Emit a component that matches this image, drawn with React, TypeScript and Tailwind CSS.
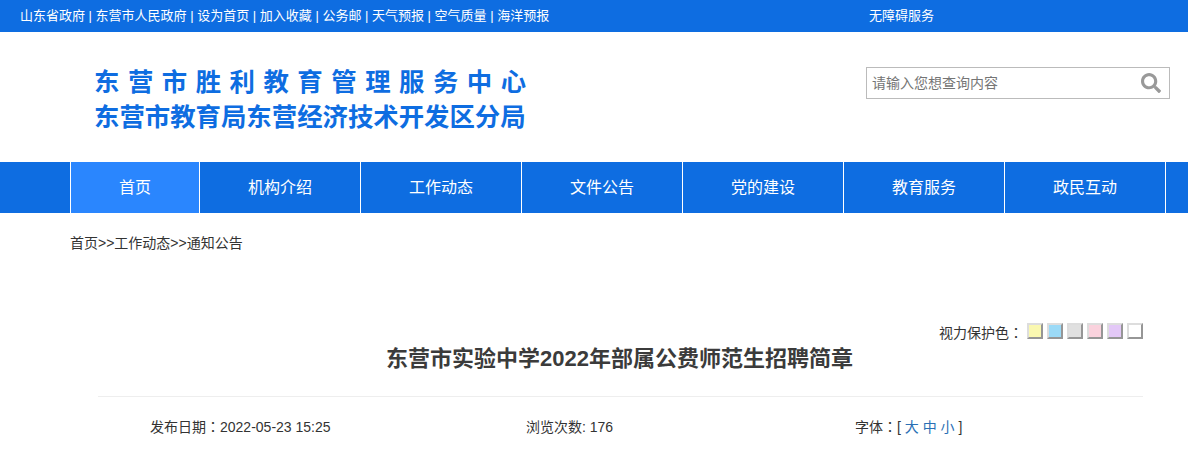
import { FaSearch } from "react-icons/fa";

const topLinks = ["山东省政府", "东营市人民政府", "设为首页", "加入收藏", "公务邮", "天气预报", "空气质量", "海洋预报"];

const navItems = ["机构介绍", "工作动态", "文件公告", "党的建设", "教育服务", "政民互动"];

const swatches = ["bg-[#faf8b0]", "bg-[#9bdaf7]", "bg-[#e0e0e0]", "bg-[#fad2dd]", "bg-[#e3c8f7]", "bg-white"];

// the full-width colon sits centred in the reference, as in the TC font
function Colon() {
  return <span className="font-['Noto_Sans_CJK_TC',sans-serif]">：</span>;
}

export default function App() {
  return (
    <div className="w-[1188px] h-[450px] overflow-hidden bg-white text-[#333] text-[14px] font-['Liberation_Sans','Noto_Sans_CJK_SC',sans-serif]">
      {/* top bar */}
      <div className="h-8 bg-[#0e6de1] text-white text-[13px] leading-[32px] flex">
        <div className="w-[869px] pl-5 whitespace-pre">{topLinks.join(" | ")}</div>
        <div>无障碍服务</div>
      </div>

      {/* header */}
      <div className="h-[130px] flex items-start">
        <div className="w-[866px] pl-[94px] pt-[33px] font-bold text-[#0e6de1] text-[25.4px] leading-[35px]">
          <div className="tracking-[8.5px] whitespace-nowrap">东营市胜利教育管理服务中心</div>
          <div className="whitespace-nowrap">东营市教育局东营经济技术开发区分局</div>
        </div>
        <div className="mt-[35px] w-[304px] h-8 border border-[#bbb] flex items-center justify-between pl-[5px] pr-2">
          <span className="text-[#757575] text-[14px]">请输入您想查询内容</span>
          <FaSearch className="text-[#999] w-5 h-5" />
        </div>
      </div>

      {/* nav */}
      <div className="h-[51px] bg-[#0e6de1] pl-[70px] flex text-white text-[16px] leading-[51px] text-center">
        <div className="w-[130px] bg-[#2a86fe] border-x border-white">首页</div>
        {navItems.map((item) => (
          <div key={item} className="w-[161px] border-r border-white">
            {item}
          </div>
        ))}
      </div>

      {/* breadcrumb */}
      <div className="pl-[70px] pt-[21px] text-[14px] leading-[18px]">首页&gt;&gt;工作动态&gt;&gt;通知公告</div>

      {/* article head */}
      <div className="ml-[98px] mr-[45px]">
        <div className="mt-[71px] flex justify-end items-start h-[16px]">
          <span className="mr-[4px] text-[14px] leading-[18px]">
            视力保护色
            <Colon />
          </span>
          <div className="flex gap-1">
            {swatches.map((bg) => (
              <div
                key={bg}
                className={`w-4 h-4 border-2 border-t-[#ddd] border-l-[#ddd] border-b-[#969696] border-r-[#969696] ${bg}`}
              />
            ))}
          </div>
        </div>
        <h1 className="mt-[4px] pr-[2px] text-center text-[22px] font-bold leading-[32px] text-[#3b3b3b]">
          东营市实验中学2022年部属公费师范生招聘简章
        </h1>
        <div className="mt-[21px] h-px bg-[#eeeeee]" />
        <div className="flex pt-[20px] text-[14px] leading-[18px]">
          <div className="w-[428px] pl-[52px]">
            发布日期
            <Colon />
            2022-05-23 15:25
          </div>
          <div className="w-[329px] pt-px">浏览次数: 176</div>
          <div>
            字体
            <Colon />[ <span className="text-[#2a6fb5]">大 中 小</span> ]
          </div>
        </div>
      </div>
    </div>
  );
}
